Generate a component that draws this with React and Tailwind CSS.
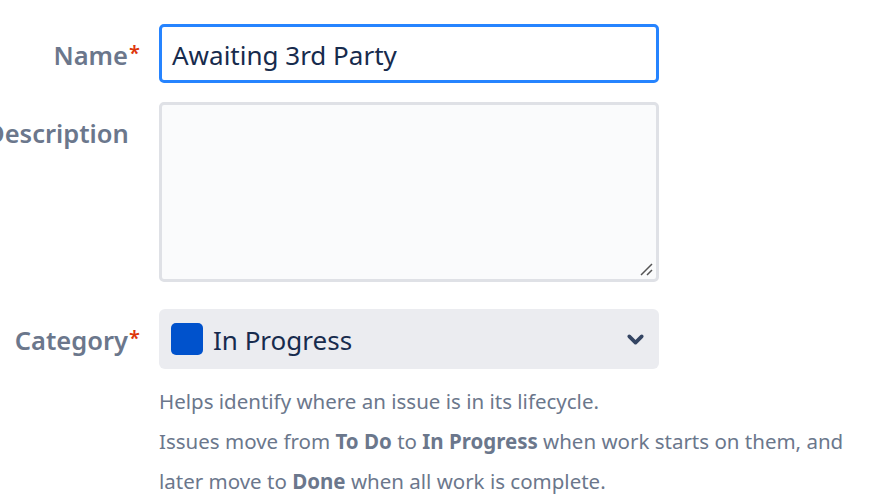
import { ChevronDown } from 'lucide-react';

const font = { fontFamily: '"Noto Sans", "Open Sans", sans-serif' };

function Label({ children, required }) {
  return (
    <div className="w-[128px] shrink-0 text-right pt-[3px]">
      <span className="relative text-[25.5px] font-semibold text-[#6b778c] whitespace-nowrap">
        {children}
        {required && <span className="absolute -right-[12px] top-[0px] text-[20px] text-[#de350b]">*</span>}
      </span>
    </div>
  );
}

export default function App() {
  return (
    <div className="w-[870px] h-[503px] bg-white overflow-hidden" style={font}>
      <div className="flex flex-col pt-[24px]">
        {/* Name */}
        <div className="flex items-center">
          <div className="flex items-center h-[59px]">
            <Label required>Name</Label>
          </div>
          <div className="ml-[31px] w-[500px] h-[59px] rounded-[5px] border-[3px] border-[#2684ff] bg-white flex items-center px-[10px] pt-[3px]">
            <span className="text-[26px] text-[#172b4d] leading-none">Awaiting 3rd Party</span>
          </div>
        </div>

        {/* Description */}
        <div className="flex mt-[19px]">
          <div className="pt-[12px] -ml-[14px]">
            <div className="w-[140px] text-right">
              <span className="text-[25.5px] font-semibold text-[#6b778c] whitespace-nowrap">Description</span>
            </div>
          </div>
          <div className="ml-[33px] relative w-[500px] h-[180px] rounded-[5px] border-[3px] border-[#dfe1e6] bg-[#fafbfc]">
            <svg className="absolute right-[3px] bottom-[3px]" width="16" height="16" viewBox="0 0 16 16">
              <path d="M15 4 L4 15 M15 10 L10 15" stroke="#555" strokeWidth="1.5" />
            </svg>
          </div>
        </div>

        {/* Category */}
        <div className="flex items-center mt-[27px]">
          <div className="flex items-center h-[60px]">
            <Label required>Category</Label>
          </div>
          <div className="ml-[31px] w-[500px] h-[60px] rounded-[6px] bg-[#ebecf0] flex items-center pl-[12px] pr-[12px]">
            <span className="w-[32px] h-[32px] rounded-[5px] bg-[#0052cc] shrink-0" />
            <span className="ml-[10px] text-[26px] text-[#172b4d] leading-none pt-[2px]">In Progress</span>
            <ChevronDown className="ml-auto -mr-[1px] text-[#344563]" size={25} strokeWidth={3.5} />
          </div>
        </div>

        {/* Help */}
        <div className="ml-[159px] mt-[12px] text-[20.5px] leading-[40px] text-[#6b778c]">
          <p>Helps identify where an issue is in its lifecycle.</p>
          <p>
            Issues move from <b className="font-bold">To Do</b> to <b className="font-bold">In Progress</b> when work starts on them, and
          </p>
          <p>
            later move to <b className="font-bold">Done</b> when all work is complete.
          </p>
        </div>
      </div>
    </div>
  );
}
